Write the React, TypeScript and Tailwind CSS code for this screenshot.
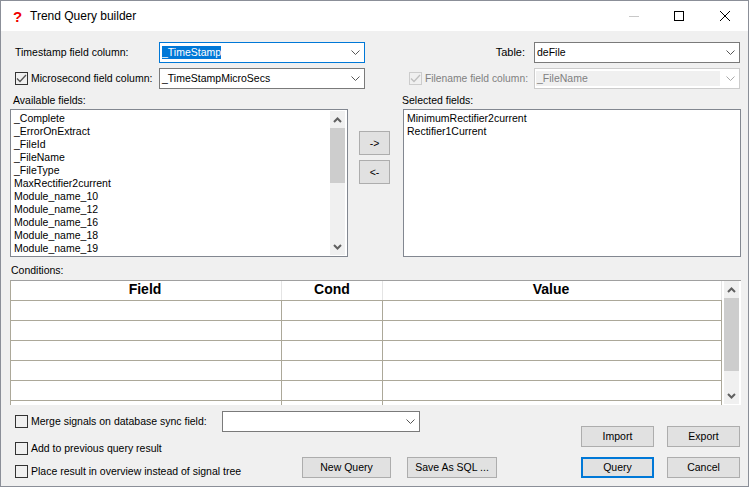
const fieldNames = [
  "_Complete",
  "_ErrorOnExtract",
  "_FileId",
  "_FileName",
  "_FileType",
  "MaxRectifier2current",
  "Module_name_10",
  "Module_name_12",
  "Module_name_16",
  "Module_name_18",
  "Module_name_19",
];

const Chevron = ({ muted }: { muted?: boolean }) => (
  <svg width="9" height="5" viewBox="0 0 9 5" className="shrink-0">
    <path d="M0.5 0.5 L4.5 4.5 L8.5 0.5" fill="none" stroke={muted ? "#a8a8a8" : "#555555"} strokeWidth="1" />
  </svg>
);

const Combo = ({
  value,
  className,
  focused,
  disabled,
}: {
  value: string;
  className: string;
  focused?: boolean;
  disabled?: boolean;
}) => (
  <div
    className={`h-[21px] shrink-0 flex items-center border bg-white ${className} ${
      focused ? "border-[#0078d7]" : disabled ? "border-[#cccccc]" : "border-[#7a7a7a]"
    }`}
  >
    <div className={`flex-1 h-full flex items-center ${disabled ? "pl-[1px] text-[#808080]" : "pl-[2px]"}`}>
      {disabled ? (
        <span className="w-[184px] h-[15px] bg-[#f0f0f0] flex items-center pl-[1px]">{value}</span>
      ) : focused ? (
        <span className="h-[13px] bg-[#0078d7] text-white flex items-center">{value}</span>
      ) : (
        <span>{value}</span>
      )}
    </div>
    <div className="w-[17px] flex justify-center">
      <Chevron muted={disabled} />
    </div>
  </div>
);

const Check = ({ checked, disabled }: { checked?: boolean; disabled?: boolean }) => (
  <span
    className={`w-[13px] h-[13px] shrink-0 border flex items-center justify-center ${
      disabled ? "border-[#cccccc]" : "border-[#333333]"
    }`}
  >
    {checked && (
      <svg width="11" height="9" viewBox="0 0 11 9">
        <path d="M1 4.5 L4 7.5 L10 1" fill="none" stroke={disabled ? "#bfbfbf" : "#555555"} strokeWidth="1.3" />
      </svg>
    )}
  </span>
);

const Btn = ({ label, className, primary }: { label: string; className: string; primary?: boolean }) => (
  <div
    className={`flex items-center justify-center bg-[#e1e1e1] ${
      primary ? "border-2 border-[#0078d7]" : "border border-[#adadad]"
    } ${className}`}
  >
    {label}
  </div>
);

const ScrollArrow = ({ up }: { up?: boolean }) => (
  <svg width="9" height="6" viewBox="0 0 9 6">
    <path d={up ? "M1 5 L4.5 1.5 L8 5" : "M1 1 L4.5 4.5 L8 1"} fill="none" stroke="#606060" strokeWidth="2" />
  </svg>
);

const Scrollbar = ({ thumb }: { thumb: string }) => (
  <div className="w-[15px] h-full shrink-0 bg-[#f0f0f0] flex flex-col items-center">
    <div className="h-[17px] shrink-0 flex items-center justify-center">
      <ScrollArrow up />
    </div>
    <div className="flex-1 w-full">
      <div className={`bg-[#cdcdcd] w-full ${thumb}`} />
    </div>
    <div className="h-[17px] shrink-0 flex items-center justify-center">
      <ScrollArrow />
    </div>
  </div>
);

export default function App() {
  return (
    <div
      className="w-[749px] h-[487px] overflow-hidden flex flex-col bg-[#f0f0f0] border border-[#8b8f98] text-[10.5px] leading-[13px] text-black"
      style={{ fontFamily: '"Liberation Sans", Arial, sans-serif' }}
    >
      <div className="h-[30px] shrink-0 bg-white flex items-center">
        <span className="w-[8px] ml-[12px] text-[#f00000] font-bold text-[15px] leading-none">?</span>
        <span className="ml-[9px] text-[12px]">Trend Query builder</span>
        <div className="ml-auto flex items-center">
          <div className="w-[46px] pl-[2px] flex justify-center">
            <div className="w-[10px] h-px bg-[#c8c8c8]" />
          </div>
          <div className="w-[46px] flex justify-center">
            <div className="w-[10px] h-[10px] border border-black" />
          </div>
          <div className="w-[46px] flex justify-center">
            <svg width="10" height="10" viewBox="0 0 10 10">
              <path d="M0 0 L10 10 M10 0 L0 10" stroke="#000" strokeWidth="1" />
            </svg>
          </div>
        </div>
      </div>

      <div className="flex-1 flex flex-col pl-[9px] pr-[7px]">
        <div className="mt-[11px] flex items-center">
          <span className="w-[149px] pl-[5px]">Timestamp field column:</span>
          <Combo value="_TimeStamp" focused className="w-[206px]" />
          <span className="ml-auto pr-[9px] text-right text-[11px]">Table:</span>
          <Combo value="deFile" className="w-[206px] mr-[1px]" />
        </div>
        <div className="mt-[5px] flex items-center">
          <div className="w-[149px] pl-[5px] flex items-center gap-[3px]">
            <Check checked />
            <span className="whitespace-nowrap">Microsecond field column:</span>
          </div>
          <Combo value="_TimeStampMicroSecs" className="w-[206px]" />
          <div className="ml-auto flex items-center gap-[3px] mr-[6px] text-[#808080]">
            <Check checked disabled />
            <span className="whitespace-nowrap text-[10.3px]">Filename field column:</span>
          </div>
          <Combo value="_FileName" disabled className="w-[206px] mr-[1px]" />
        </div>

        <div className="mt-[4px] flex h-[164px] shrink-0">
          <div className="w-[338px] flex flex-col">
            <span className="pl-[3px] h-[15px] leading-[15px]">Available fields:</span>
            <div className="mt-[1px] flex-1 flex border border-[#828790] bg-white p-[1px] pr-[2px] min-h-0">
              <div className="flex-1 pl-[2px] pt-[1px] overflow-hidden">
                {fieldNames.map((name) => (
                  <div key={name} className="h-[13px] leading-[13px]">
                    {name}
                  </div>
                ))}
              </div>
              <Scrollbar thumb="h-[55px]" />
            </div>
          </div>

          <div className="w-[55px] pl-[11px] flex flex-col items-start">
            <Btn label="->" className="mt-[38px] w-[31px] h-[24px]" />
            <Btn label="<-" className="mt-[5px] w-[31px] h-[24px]" />
          </div>

          <div className="w-[338px] flex flex-col">
            <span className="ml-[-1px] h-[15px] leading-[15px]">Selected fields:</span>
            <div className="mt-[1px] flex-1 border border-[#828790] bg-white pl-[3px] pt-[2px]">
              <div className="h-[13px]">MinimumRectifier2current</div>
              <div className="h-[13px]">Rectifier1Current</div>
            </div>
          </div>
        </div>

        <span className="mt-[6px] pl-[1px] h-[14px] leading-[14px]">Conditions:</span>

        <div className="mt-[3px] w-[731px] h-[125px] border-t border-t-[#a0a0a0] border-l border-l-[#aca899] bg-white flex overflow-hidden shrink-0">
          <div className="w-[711px] overflow-hidden">
            <div className="grid grid-cols-[271px_101px_339px] h-[20px] font-bold text-[14px] border-b border-[#aca899]">
              <div className="flex items-center justify-center pr-[2px] pb-[2px] border-r border-[#e4e4e4]">Field</div>
              <div className="flex items-center justify-center pb-[2px] border-r border-[#e4e4e4]">Cond</div>
              <div className="flex items-center justify-center pr-[2px] pb-[2px] border-r border-[#e4e4e4]">Value</div>
            </div>
            {[0, 1, 2, 3, 4, 5].map((row) => (
              <div key={row} className="grid grid-cols-[271px_101px_339px] h-[20px] border-b border-[#aca899]">
                <div className="border-r border-[#aca899]" />
                <div className="border-r border-[#aca899]" />
                <div className="border-r border-[#aca899]" />
              </div>
            ))}
          </div>
          <div className="px-[2px] pb-[1px] h-full">
            <Scrollbar thumb="h-[73px]" />
          </div>
        </div>

        <div className="flex-1 flex">
          <div className="w-[212px] pl-[5px] flex flex-col shrink-0">
            <div className="mt-[10px] h-[13px] flex items-center gap-[3px]">
              <Check />
              <span className="whitespace-nowrap">Merge signals on database sync field:</span>
            </div>
            <div className="mt-[14px] h-[13px] flex items-center gap-[3px]">
              <Check />
              <span className="whitespace-nowrap">Add to previous query result</span>
            </div>
            <div className="mt-[10px] h-[13px] flex items-center gap-[3px]">
              <Check />
              <span className="whitespace-nowrap">Place result in overview instead of signal tree</span>
            </div>
          </div>
          <div className="flex-1 flex flex-col">
            <Combo value="" className="mt-[6px] w-[198px]" />
            <div className="mt-auto mb-[8px] flex ml-[80px] gap-[16px]">
              <Btn label="New Query" className="w-[89px] h-[21px]" />
              <Btn label="Save As SQL ..." className="w-[90px] h-[21px]" />
            </div>
          </div>
          <div className="w-[160px] pr-[1px] flex flex-col justify-end mb-[8px] gap-[10px]">
            <div className="flex gap-[13px]">
              <Btn label="Import" className="w-[73px] h-[21px]" />
              <Btn label="Export" className="w-[73px] h-[21px]" />
            </div>
            <div className="flex gap-[13px]">
              <Btn label="Query" primary className="w-[73px] h-[21px]" />
              <Btn label="Cancel" className="w-[73px] h-[21px]" />
            </div>
          </div>
        </div>
      </div>
    </div>
  );
}
